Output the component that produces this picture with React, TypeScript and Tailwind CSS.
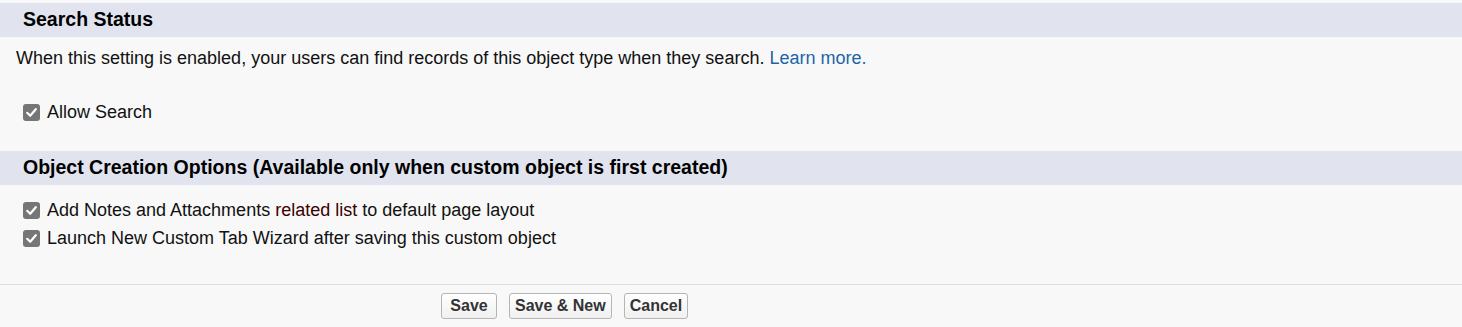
import React from 'react';

const Check: React.FC<{ label: React.ReactNode }> = ({ label }) => (
  <label className="flex items-center h-[28px] pl-[23px]">
    <span className="w-[17px] h-[17px] rounded-[3px] bg-[#767676] flex items-center justify-center mr-[7px]">
      <svg width="13" height="13" viewBox="0 0 13 13">
        <path d="M2.2 6.8 L5.2 9.8 L10.8 3.2" fill="none" stroke="#fff" strokeWidth="2.2" strokeLinecap="round" strokeLinejoin="round" />
      </svg>
    </span>
    <span className="text-[18px] text-[#111]">{label}</span>
  </label>
);

const SectionHeader: React.FC<{ title: string }> = ({ title }) => (
  <div className="h-[34px] bg-[#e1e4ee] flex items-center pl-[23px]">
    <h3 className="text-[19.5px] font-bold text-black">{title}</h3>
  </div>
);

const Btn: React.FC<{ children: React.ReactNode; className?: string }> = ({ children, className = '' }) => (
  <button
    className={`h-[26px] px-[5px] rounded-[3px] border border-[#b5b5b5] bg-gradient-to-b from-white to-[#f0f0f0] text-[16px] font-bold text-[#333] leading-none ${className}`}
  >
    {children}
  </button>
);

export default function App() {
  return (
    <div className="w-[1462px] h-[327px] bg-[#f8f8f8] pt-[3px] overflow-hidden" style={{ fontFamily: '"Liberation Sans", Arial, sans-serif' }}>
      <SectionHeader title="Search Status" />
      <p className="h-[42px] flex items-center pl-[16px] text-[18px] text-[#111]">
        When this setting is enabled, your users can find records of this object type when they search.&nbsp;
        <a className="text-[#1b64a8]">Learn more.</a>
      </p>
      <div className="mt-[19px]">
        <Check label="Allow Search" />
      </div>
      <div className="mt-[25px]">
        <SectionHeader title="Object Creation Options (Available only when custom object is first created)" />
      </div>
      <div className="mt-[11px]">
        <Check
          label={
            <>
              Add Notes and Attachments <span className="text-[#3a0000]">related list</span> to default page layout
            </>
          }
        />
        <Check label="Launch New Custom Tab Wizard after saving this custom object" />
      </div>
      <div className="mt-[32px] border-t border-[#dcdcdc] pt-[8px] pl-[441px] flex gap-[12px]">
        <Btn className="w-[56px]">Save</Btn>
        <Btn>Save &amp; New</Btn>
        <Btn>Cancel</Btn>
      </div>
    </div>
  );
}
